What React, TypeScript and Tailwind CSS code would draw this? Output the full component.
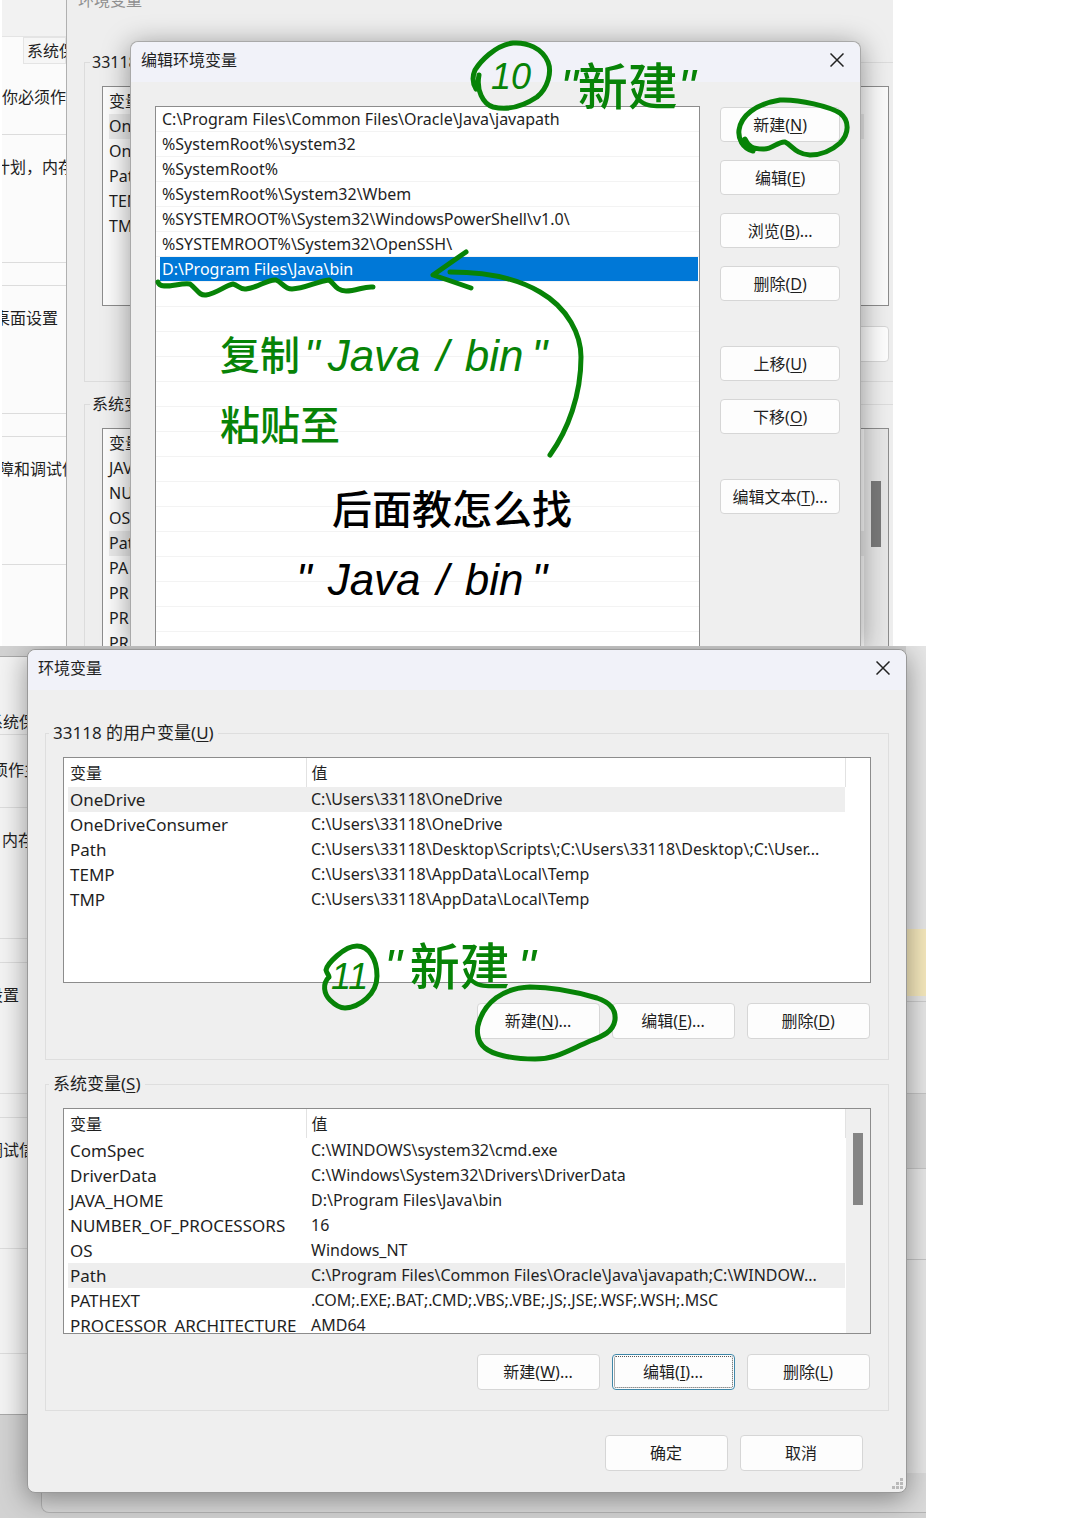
import React from 'react';
import clsx from 'clsx';

interface Variable {
  name: string;
  value: string;
}

const pathEntries = [
  'C:\\Program Files\\Common Files\\Oracle\\Java\\javapath',
  '%SystemRoot%\\system32',
  '%SystemRoot%',
  '%SystemRoot%\\System32\\Wbem',
  '%SYSTEMROOT%\\System32\\WindowsPowerShell\\v1.0\\',
  '%SYSTEMROOT%\\System32\\OpenSSH\\',
  'D:\\Program Files\\Java\\bin',
];

const emptyRows = Array.from({ length: 14 }, (_, i) => i);

const userVariables: Variable[] = [
  { name: 'OneDrive', value: 'C:\\Users\\33118\\OneDrive' },
  { name: 'OneDriveConsumer', value: 'C:\\Users\\33118\\OneDrive' },
  { name: 'Path', value: 'C:\\Users\\33118\\Desktop\\Scripts\\;C:\\Users\\33118\\Desktop\\;C:\\User...' },
  { name: 'TEMP', value: 'C:\\Users\\33118\\AppData\\Local\\Temp' },
  { name: 'TMP', value: 'C:\\Users\\33118\\AppData\\Local\\Temp' },
];

const systemVariables: Variable[] = [
  { name: 'ComSpec', value: 'C:\\WINDOWS\\system32\\cmd.exe' },
  { name: 'DriverData', value: 'C:\\Windows\\System32\\Drivers\\DriverData' },
  { name: 'JAVA_HOME', value: 'D:\\Program Files\\Java\\bin' },
  { name: 'NUMBER_OF_PROCESSORS', value: '16' },
  { name: 'OS', value: 'Windows_NT' },
  { name: 'Path', value: 'C:\\Program Files\\Common Files\\Oracle\\Java\\javapath;C:\\WINDOW...' },
  { name: 'PATHEXT', value: '.COM;.EXE;.BAT;.CMD;.VBS;.VBE;.JS;.JSE;.WSF;.WSH;.MSC' },
  { name: 'PROCESSOR_ARCHITECTURE', value: 'AMD64' },
];

const hiddenUserNames = ['On', 'On', 'Pat', 'TEM', 'TM'];
const hiddenSystemNames = ['JAV', 'NU', 'OS', 'Pat', 'PA', 'PR', 'PR', 'PR'];

interface DialogButtonProps {
  label: string;
  hotkey?: string;
  more?: boolean;
  focused?: boolean;
  className?: string;
}

function DialogButton({ label, hotkey, more, focused, className }: DialogButtonProps) {
  return (
    <button
      type="button"
      className={clsx(
        'flex items-center justify-center rounded border bg-[#fdfdfd] whitespace-nowrap',
        focused ? 'border-[#3f87a8] p-px' : 'border-[#d6d6d6]',
        className
      )}
    >
      <span
        className={clsx(
          'flex h-full w-full items-center justify-center',
          focused && 'rounded-xs border border-dotted border-[#555555]'
        )}
      >
        {label}
        {hotkey && (
          <>
            (<u className="underline-offset-2">{hotkey}</u>)
          </>
        )}
        {more && '...'}
      </span>
    </button>
  );
}

function TitleBar({ title }: { title: string }) {
  return (
    <header className="flex h-10 items-center justify-between rounded-t-lg bg-[#f1f2f9] pr-4 pb-1 pl-[10px]">
      <h2>{title}</h2>
      <button type="button" aria-label="关闭">
        <svg width="14" height="14" viewBox="0 0 14 14" fill="none" stroke="#222222" strokeWidth="1.5">
          <path d="M0.5 0.5L13.5 13.5M13.5 0.5L0.5 13.5" />
        </svg>
      </button>
    </header>
  );
}

function VariableTable({ rows, active, scroll }: { rows: Variable[]; active: string; scroll?: boolean }) {
  return (
    <div className="flex h-[226px] overflow-hidden border border-[#8c8c8c] bg-white">
      <div className="flex-1 overflow-hidden pl-1">
        <table className="w-full table-fixed text-left">
          <thead>
            <tr className="h-[29px]">
              <th className="w-[238px] border-r border-[#e2e2e2] pl-[2px] font-normal">变量</th>
              <th className="border-r border-[#e2e2e2] pl-[5px] font-normal">值</th>
            </tr>
          </thead>
          <tbody>
            {rows.map((row) => (
              <tr key={row.name} className={clsx('h-[25px] leading-[25px]', row.name === active && 'bg-[#eeeeee]')}>
                <td className="pl-[2px] text-[17px] whitespace-nowrap">{row.name}</td>
                <td className="pl-[5px] whitespace-nowrap">{row.value}</td>
              </tr>
            ))}
          </tbody>
        </table>
      </div>
      <div className={clsx('flex w-6 justify-center pt-6', scroll && 'bg-[#efefef]')}>
        {scroll && <div className="h-[72px] w-[10px] bg-[#858585]" />}
      </div>
    </div>
  );
}

function HiddenList({ names, active, className }: { names: string[]; active: number; className?: string }) {
  return (
    <div className={clsx('border border-[#8c8c8c] bg-[#fbfbfb] pt-px pl-[6px]', className)}>
      <div className="h-[26px] leading-[26px]">变量</div>
      {names.map((name, i) => (
        <div key={i} className={clsx('mr-6 h-[25px] leading-[25px]', i === active && 'bg-[#e9e9e9]')}>
          {name}
        </div>
      ))}
    </div>
  );
}

/* the environment variables window behind the path editor */
function BackWindow() {
  return (
    <div className="absolute inset-y-0 right-0 left-[66px] overflow-hidden border-l border-[#b0b0b0] bg-[#eeeeee] pl-[17px]">
      <div className="-mt-3 h-6 text-[#8f8f8f]">
        <span className="-ml-[6px]">环境变量</span>
      </div>
      <fieldset className="mt-[38px] h-[332px] border border-r-0 border-[#dcdcdc] pr-1 pl-[17px]">
        <legend className="-ml-3 px-[2px] leading-6">33118</legend>
        <HiddenList names={hiddenUserNames} active={0} className="mt-3 h-[220px]" />
        <div className="mt-5 flex justify-end">
          <DialogButton label="" className="h-9 w-[120px]" />
        </div>
      </fieldset>
      <fieldset className="mt-[10px] h-[300px] border border-r-0 border-[#dcdcdc] pr-1 pl-[17px]">
        <legend className="-ml-3 px-[2px] leading-6">系统变量</legend>
        <div className="relative mt-3">
          <HiddenList names={hiddenSystemNames} active={3} className="h-[300px]" />
          <div className="absolute top-px right-px flex h-[298px] w-6 justify-center bg-[#e6e6e6] pt-[52px]">
            <div className="h-[66px] w-[10px] bg-[#7a7a7a]" />
          </div>
        </div>
      </fieldset>
    </div>
  );
}

function PropertiesWindow() {
  return (
    <div className="absolute inset-y-0 left-[2px] w-16 overflow-hidden bg-[#fbfbfb] whitespace-nowrap">
      <div className="h-[37px] border-b border-[#e4e4e4] bg-[#f2f2f2]" />
      <div className="ml-[21px] h-[27px] border border-[#e4e4e4] bg-[#f6f6f6] pl-[3px] leading-[26px]">系统保</div>
      <div className="h-[71px] border-b border-[#dcdcdc] pt-[21px] leading-6">你必须作主</div>
      <div className="h-32 border-b border-[#dcdcdc] pt-5 leading-6">
        <span className="-ml-2">计划，内存</span>
      </div>
      <div className="h-[23px] border-b border-[#dcdcdc]" />
      <div className="h-32 border-b border-[#dcdcdc] pt-5 leading-6">
        <span className="-ml-2">桌面设置</span>
      </div>
      <div className="h-[23px] border-b border-[#dcdcdc]" />
      <div className="h-32 border-b border-[#dcdcdc] pt-5 leading-6">
        <span className="-ml-1">障和调试信</span>
      </div>
    </div>
  );
}

function Note({ className, children }: { className: string; children: React.ReactNode }) {
  return (
    <div
      className={clsx(
        'pointer-events-none absolute flex items-center whitespace-nowrap font-["Liberation_Sans","Noto_Sans_CJK_SC",sans-serif]',
        className
      )}
    >
      {children}
    </div>
  );
}

function PathEditor() {
  return (
    <section className="relative w-[82.7%] overflow-hidden pt-[41px] pr-8 pl-[130px]">
      <PropertiesWindow />
      <BackWindow />
      <div className="relative rounded-t-lg border border-b-0 border-[#a9a9a9] bg-[#efefef] shadow-[0_4px_28px_rgba(0,0,0,0.4)]">
        <TitleBar title="编辑环境变量" />
        <div className="flex gap-5 pt-6 pr-5 pl-6">
          <ul className="flex-1 border border-b-0 border-[#8c8c8c] bg-white pb-[14px]">
            {pathEntries.map((entry, i) => (
              <li key={entry} className="h-[25px] border-b border-[#f3f3f3] pr-px pl-1 leading-[25px] whitespace-nowrap">
                <div className={clsx('h-6 px-[2px]', i === 6 && 'bg-[#0078d7] text-white')}>{entry}</div>
              </li>
            ))}
            {emptyRows.map((row) => (
              <li key={row} className="h-[25px] border-b border-[#f3f3f3]" />
            ))}
          </ul>
          <div className="flex w-[120px] flex-col gap-[18px] pt-px">
            <DialogButton label="新建" hotkey="N" className="h-[35px]" />
            <DialogButton label="编辑" hotkey="E" className="h-[35px]" />
            <DialogButton label="浏览" hotkey="B" more className="h-[35px]" />
            <DialogButton label="删除" hotkey="D" className="h-[35px]" />
            <DialogButton label="上移" hotkey="U" className="mt-[27px] h-[35px]" />
            <DialogButton label="下移" hotkey="O" className="h-[35px]" />
            <DialogButton label="编辑文本" hotkey="T" more className="mt-[27px] h-[35px]" />
          </div>
        </div>
      </div>

      <svg
        className="pointer-events-none absolute top-0 left-0"
        width="893"
        height="645"
        fill="none"
        stroke="#078307"
        strokeWidth="5"
        strokeLinecap="round"
        strokeLinejoin="round"
      >
        <path d="M479 75C476 90 483 104 493 107C510 111 525 105 537 97C548 88 552 72 548 62C542 48 527 42 513 43C495 45 480 62 475 70C472 77 473 84 476 89" />
        <path d="M753 151C742 148 738 138 739 130C741 116 755 104 780 100C800 99 830 107 840 113C850 121 849 134 840 143C830 152 820 155 810 155C795 154 792 145 785 142C778 141 772 150 763 149C752 149 748 146 745 139" />
        <path d="M158 282C160 291 180 282 190 284C197 289 199 296 206 295C216 294 226 285 233 284C238 285 240 290 246 289C257 288 268 279 276 280C282 282 284 289 292 289C304 289 318 281 329 280C334 283 336 291 346 291C357 291 364 286 373 287" />
        <path d="M466 252L433 275Q448 280 471 288" />
        <path d="M450 272C490 272 520 280 540 292C568 308 581 335 581 357C581 395 568 430 550 455" />
      </svg>
      <Note className="top-[57px] left-[491px] text-[36px] leading-10 text-[#078307] italic">10</Note>
      <Note className="top-[56px] left-[560px] text-[50px] leading-[64px] font-medium text-[#078307]">
        <i>"</i>新建<i>"</i>
      </Note>
      <Note className="top-[324px] left-[220px] gap-4 text-[44px] leading-[64px] text-[#078307]">
        <span className="text-[40px] font-medium">复制</span>
        <i className="-mr-2 -ml-3">"</i>
        <i>Java</i>
        <i>/</i>
        <i>bin</i>
        <i className="-ml-2">"</i>
      </Note>
      <Note className="top-[396px] left-[220px] text-[40px] leading-[60px] font-medium text-[#078307]">粘贴至</Note>
      <Note className="top-[480px] left-[332px] text-[40px] leading-[60px] font-medium text-black">后面教怎么找</Note>
      <Note className="top-[548px] left-[296px] gap-4 text-[44px] leading-[64px] text-black">
        <i>"</i>
        <i>Java</i>
        <i>/</i>
        <i>bin</i>
        <i className="-ml-2">"</i>
      </Note>
    </section>
  );
}

function EnvironmentVariables() {
  return (
    <section className="relative w-[85.7%] overflow-hidden bg-[#d2d2d2] pt-[3px] pr-[19px] pb-[25px] pl-[27px]">
      <div className="absolute top-[10px] left-0 h-[759px] w-7 overflow-hidden border-y border-[#a8a8a8] bg-[#f3f3f3] whitespace-nowrap">
        <div className="h-[78px] border-b border-[#dcdcdc] pt-[53px] leading-6">
          <span className="-ml-[13px]">系统保</span>
        </div>
        <div className="h-[73px] border-b border-[#dcdcdc] pt-[23px] leading-6">
          <span className="-ml-2">须作主</span>
        </div>
        <div className="h-[131px] border-b border-[#dcdcdc] pt-5 pl-[2px] leading-6">内存</div>
        <div className="h-6 border-b border-[#dcdcdc]" />
        <div className="h-[131px] border-b border-[#dcdcdc] pt-5 leading-6">
          <span className="-ml-[13px]">设置</span>
        </div>
        <div className="h-6 border-b border-[#dcdcdc]" />
        <div className="h-[131px] border-b border-[#dcdcdc] pt-5 leading-6">
          <span className="-ml-[13px]">调试信</span>
        </div>
        <div className="h-[105px] border-b border-[#dcdcdc]" />
      </div>
      <div className="absolute top-0 right-0 flex h-[867px] w-5 flex-col bg-[#e6e6e6]">
        <div className="h-[283px]" />
        <div className="h-[67px] bg-[#f6e9bd]" />
        <div className="h-[6px] border-b border-[#cccccc]" />
        <div className="h-[91px]" />
        <div className="h-[76px] border-y border-[#c4c4c4] bg-[#d8d8d8]" />
        <div className="h-[91px] border-b border-[#c4c4c4]" />
      </div>
      <div className="absolute right-0 bottom-[5px] left-[41px] h-10 rounded-bl-lg border-b border-l border-[#b4b4b4] bg-[#dadada]" />

      <div className="relative rounded-lg border border-[#999999] bg-[#efefef] shadow-[0_6px_28px_rgba(0,0,0,0.4)]">
        <TitleBar title="环境变量" />
        <div className="px-[17px] pt-[31px] pb-[21px]">
          <fieldset className="border border-[#dedede] px-[17px] pb-5">
            <legend className="-ml-[14px] px-1 text-[17px] leading-6">
              33118 的用户变量(<u className="underline-offset-2">U</u>)
            </legend>
            <div className="flex flex-col gap-5 pt-3">
              <VariableTable rows={userVariables} active="OneDrive" />
              <div className="flex justify-end gap-3 pr-px">
                <DialogButton label="新建" hotkey="N" more className="h-9 w-[123px]" />
                <DialogButton label="编辑" hotkey="E" more className="h-9 w-[123px]" />
                <DialogButton label="删除" hotkey="D" className="h-9 w-[123px]" />
              </div>
            </div>
          </fieldset>
          <fieldset className="mt-3 border border-[#dedede] px-[17px] pb-5">
            <legend className="-ml-[14px] px-1 text-[17px] leading-6">
              系统变量(<u className="underline-offset-2">S</u>)
            </legend>
            <div className="flex flex-col gap-5 pt-3">
              <VariableTable rows={systemVariables} active="Path" scroll />
              <div className="flex justify-end gap-3 pr-px">
                <DialogButton label="新建" hotkey="W" more className="h-9 w-[123px]" />
                <DialogButton label="编辑" hotkey="I" more focused className="h-9 w-[123px]" />
                <DialogButton label="删除" hotkey="L" className="h-9 w-[123px]" />
              </div>
            </div>
          </fieldset>
          <div className="mt-6 flex justify-end gap-3 pr-[26px]">
            <DialogButton label="确定" className="h-9 w-[123px]" />
            <DialogButton label="取消" className="h-9 w-[123px]" />
          </div>
        </div>
        <svg className="absolute right-[2px] bottom-[2px]" width="12" height="12" fill="#b9b9b9">
          <path d="M8 0h3v3h-3zM8 4h3v3h-3zM4 4h3v3h-3zM8 8h3v3h-3zM4 8h3v3h-3zM0 8h3v3h-3z" />
        </svg>
      </div>

      <svg
        className="pointer-events-none absolute top-0 left-0"
        width="926"
        height="872"
        fill="none"
        stroke="#078307"
        strokeWidth="5"
        strokeLinecap="round"
        strokeLinejoin="round"
      >
        <path d="M329 331C322 338 324 348 330 354C336 360 340 362 345 362C360 361 377 348 377 330C377 312 368 300 357 300C344 300 327 318 326 324C327 328 329 329 329 331" />
        <path d="M485 402C477 396 476 384 479 376C485 357 502 342 530 341C555 341 580 347 597 352C612 357 616 365 615 374C613 386 603 390 590 395C565 406 555 413 535 413C510 413 492 408 485 402" />
      </svg>
      <Note className="top-[311px] left-[331px] text-[36px] leading-10 text-[#078307] italic">11</Note>
      <Note className="top-[290px] left-[384px] gap-2 text-[50px] leading-[64px] font-medium text-[#078307]">
        <i>"</i>新建<i>"</i>
      </Note>
    </section>
  );
}

export default function App() {
  return (
    <main className="min-h-screen bg-white font-['Noto_Sans','Noto_Sans_CJK_SC',sans-serif] text-base text-[#1f1f1f]">
      <PathEditor />
      <EnvironmentVariables />
    </main>
  );
}
